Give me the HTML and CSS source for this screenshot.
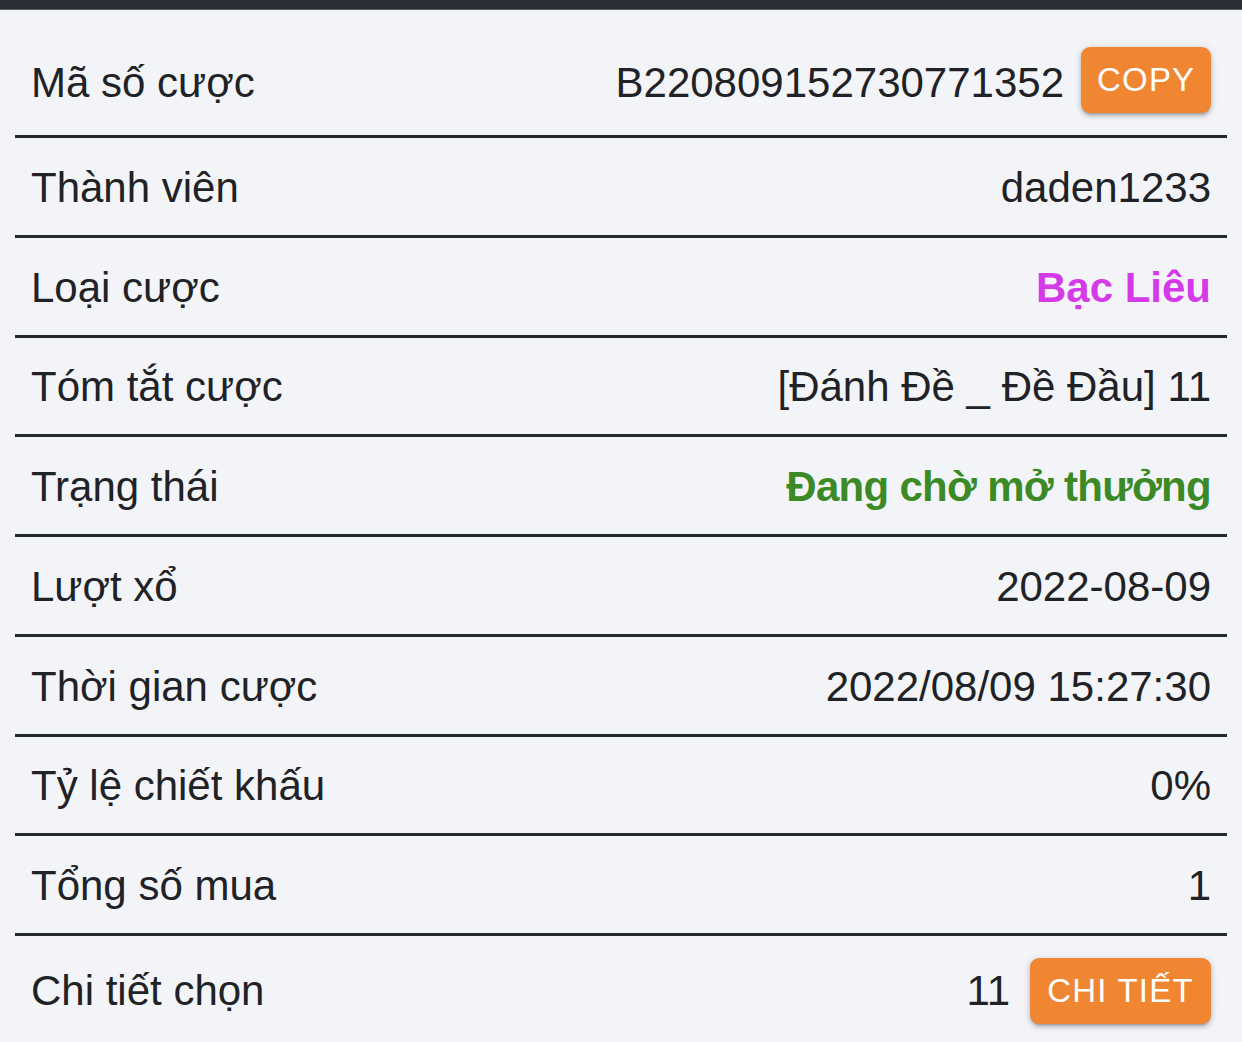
FILE: index.html
```html
<!DOCTYPE html>
<html lang="vi">
<head>
<meta charset="utf-8">
<title>Chi tiết cược</title>
<link rel="stylesheet" href="styles.css">
</head>
<body>
<div class="topbar"></div>
<div class="list">
  <div class="row row-btn">
    <span class="label">Mã số cược</span>
    <span class="value">B220809152730771352<button class="btn btn-copy">COPY</button></span>
  </div>
  <div class="row">
    <span class="label">Thành viên</span>
    <span class="value">daden1233</span>
  </div>
  <div class="row">
    <span class="label">Loại cược</span>
    <span class="value purple">Bạc Liêu</span>
  </div>
  <div class="row">
    <span class="label">Tóm tắt cược</span>
    <span class="value">[Đánh Đề _ Đề Đầu] 11</span>
  </div>
  <div class="row">
    <span class="label">Trạng thái</span>
    <span class="value green">Đang chờ mở thưởng</span>
  </div>
  <div class="row">
    <span class="label">Lượt xổ</span>
    <span class="value">2022-08-09</span>
  </div>
  <div class="row">
    <span class="label">Thời gian cược</span>
    <span class="value">2022/08/09 15:27:30</span>
  </div>
  <div class="row">
    <span class="label">Tỷ lệ chiết khấu</span>
    <span class="value">0%</span>
  </div>
  <div class="row">
    <span class="label">Tổng số mua</span>
    <span class="value">1</span>
  </div>
  <div class="row row-btn last">
    <span class="label">Chi tiết chọn</span>
    <span class="value">11<button class="btn btn-detail">CHI TIẾT</button></span>
  </div>
</div>
</body>
</html>
```

FILE: styles.css
```css
html, body {
  margin: 0;
  padding: 0;
  background: #f3f4f8;
}
body {
  font-family: "Liberation Sans", Arial, sans-serif;
  color: #202226;
  overflow: hidden;
}
.topbar {
  height: 9px;
  background: #2a2f38;
  border-bottom: 1px solid #5a5d66;
}
.list {
  margin: 17px 15px 0;
}
.row {
  display: flex;
  align-items: center;
  justify-content: space-between;
  min-height: 111px;
  padding: 3px 16px 0;
  border-bottom: 3px solid #24272d;
  font-size: 42px;
  box-sizing: border-box;
}
.row + .row {
  min-height: 99.75px;
}
.row.last {
  border-bottom: none;
  min-height: 108px;
  padding-top: 1px;
}
.label {
  white-space: nowrap;
}
.value {
  display: flex;
  align-items: center;
  white-space: nowrap;
}
.purple {
  color: #d53ae8;
  font-weight: bold;
}
.green {
  color: #3b8a25;
  font-weight: bold;
  letter-spacing: -0.7px;
}
.btn {
  font-family: "Liberation Sans", Arial, sans-serif;
  background: #f08632;
  color: #ffffff;
  border: none;
  border-radius: 9px;
  height: 66px;
  font-size: 33px;
  letter-spacing: 1.2px;
  padding: 0 16px;
  box-shadow: 0 3px 3px -2px rgba(0,0,0,0.25), 0 3px 5px 0 rgba(0,0,0,0.16), 0 1px 8px 0 rgba(0,0,0,0.12);
}
.btn-copy {
  width: 130px;
  margin-left: 17px;
  margin-top: -6px;
}
.btn-detail {
  width: 181px;
  margin-left: 20px;
}
```
